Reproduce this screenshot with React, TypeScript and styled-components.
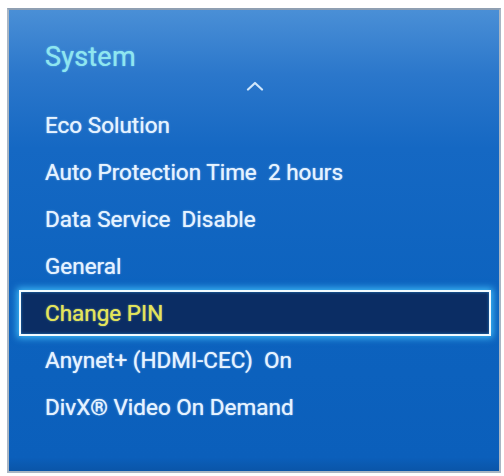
import React from "react";
import styled, { createGlobalStyle } from "styled-components";

const Global = createGlobalStyle`
  html, body { margin: 0; padding: 0; background: #ffffff; }
  body { font-family: Roboto, "Liberation Sans", Arial, sans-serif; }
`;

const Page = styled.div`
  width: 504px;
  height: 476px;
  padding: 8px 0 0 7px;
  box-sizing: border-box;
  background: #ffffff;
`;

const Panel = styled.div`
  width: 494px;
  height: 465px;
  box-sizing: border-box;
  border: 2px solid #a9b6c4;
  border-top-color: #8e9fb2;
  background: linear-gradient(
    180deg,
    #4a8fd6 0%,
    #2b77cb 14%,
    #1568c3 30%,
    #0d63bf 60%,
    #0b5fbb 97%,
    #0a55a8 100%
  );
  display: flex;
  flex-direction: column;
`;

const Header = styled.div`
  height: 92px;
  box-sizing: border-box;
  padding: 31px 0 0 36px;
  display: flex;
  flex-direction: column;
`;

const Title = styled.div`
  font-size: 27px;
  line-height: 32px;
  color: #8fe6ef;
  letter-spacing: 0.2px;
  text-shadow: 0 0 1px rgba(140, 235, 255, 0.8), 0 0 3px rgba(120, 230, 255, 0.3);
`;

const Caret = styled.svg`
  align-self: center;
  margin: 8px 0 0 -34px;
  width: 18px;
  height: 10px;
`;

const List = styled.div`
  display: flex;
  flex-direction: column;
`;

const Row = styled.div<{ $selected?: boolean }>`
  margin: 0 8px 0 10px;
  box-sizing: border-box;
  padding-left: 24px;
  font-size: 22.5px;
  font-weight: 400;
  line-height: 43px;
  white-space: pre;
  color: ${(p) => (p.$selected ? "#e3e55a" : "#e6f3ff")};
  text-shadow: 0 0 1px
      ${(p) => (p.$selected ? "rgba(230, 230, 90, 0.9)" : "rgba(230, 243, 255, 0.9)")},
    0 0 3px rgba(170, 220, 255, 0.3);
  border: 2px solid ${(p) => (p.$selected ? "#f2fbff" : "transparent")};
  background: ${(p) => (p.$selected ? "#0b2d64" : "transparent")};
  box-shadow: ${(p) =>
    p.$selected
      ? "0 0 7px 2px rgba(70, 200, 255, 0.85), inset 0 0 3px rgba(60, 180, 255, 0.6)"
      : "none"};
  height: ${(p) => (p.$selected ? "46px" : "47px")};
  margin-bottom: ${(p) => (p.$selected ? "1px" : "0")};
`;

const items = [
  "Eco Solution",
  "Auto Protection Time  2 hours",
  "Data Service  Disable",
  "General",
  "Change PIN",
  "Anynet+ (HDMI-CEC)  On",
  "DivX\u00AE Video On Demand",
];

export default function App() {
  return (
    <>
      <Global />
      <Page>
        <Panel>
          <Header>
            <Title>System</Title>
            <Caret viewBox="0 0 18 10">
              <path
                d="M2 8.5 L9 2 L16 8.5"
                fill="none"
                stroke="#cfe6fb"
                strokeWidth="2.2"
                strokeLinecap="round"
                strokeLinejoin="round"
              />
            </Caret>
          </Header>
          <List>
            {items.map((t) => (
              <Row key={t} $selected={t === "Change PIN"}>
                {t}
              </Row>
            ))}
          </List>
        </Panel>
      </Page>
    </>
  );
}
